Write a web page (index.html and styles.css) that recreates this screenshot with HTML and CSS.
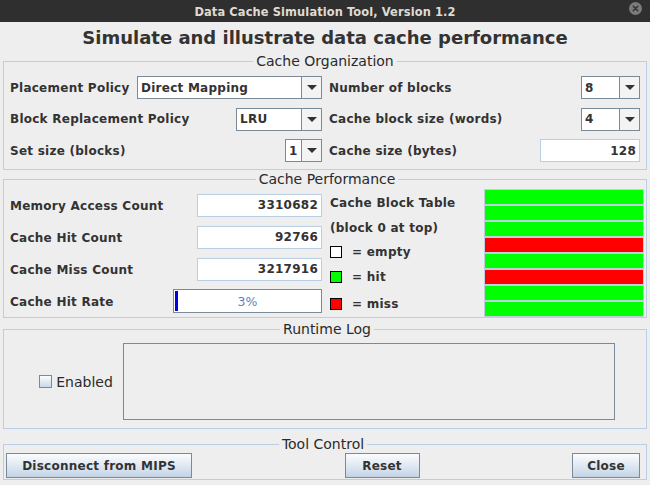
FILE: index.html
```html
<!DOCTYPE html>
<html>
<head>
<meta charset="utf-8">
<link rel="stylesheet" href="styles.css">
</head>
<body>
<div class="titlebar">
  <span class="title">Data Cache Simulation Tool, Version 1.2</span>
  <span class="close"><svg width="13" height="13" viewBox="0 0 13 13"><circle cx="6.5" cy="6.5" r="6.5" fill="#7b7b7b"/><path d="M4.3 4.3 L8.7 8.7 M8.7 4.3 L4.3 8.7" stroke="#353535" stroke-width="1.6" stroke-linecap="round"/></svg></span>
</div>
<h1 class="heading">Simulate and illustrate data cache performance</h1>

<fieldset class="panel panel-org">
  <legend>Cache Organization</legend>
  <div class="org-grid">
    <div class="row"><span class="lbl">Placement Policy</span>
      <div class="combo w-dm"><span class="combo-val">Direct Mapping</span><span class="combo-btn"><i class="tri"></i></span></div></div>
    <div class="row"><span class="lbl">Number of blocks</span>
      <div class="combo w-num"><span class="combo-val">8</span><span class="combo-btn"><i class="tri"></i></span></div></div>
    <div class="row"><span class="lbl">Block Replacement Policy</span>
      <div class="combo w-lru"><span class="combo-val">LRU</span><span class="combo-btn"><i class="tri"></i></span></div></div>
    <div class="row"><span class="lbl">Cache block size (words)</span>
      <div class="combo w-num"><span class="combo-val">4</span><span class="combo-btn"><i class="tri"></i></span></div></div>
    <div class="row"><span class="lbl">Set size (blocks)</span>
      <div class="combo w-set"><span class="combo-val">1</span><span class="combo-btn"><i class="tri"></i></span></div></div>
    <div class="row"><span class="lbl">Cache size (bytes)</span>
      <span class="field w-size">128</span></div>
  </div>
</fieldset>

<fieldset class="panel panel-perf">
  <legend>Cache Performance</legend>
  <div class="perf">
    <div class="perf-left">
      <div class="prow"><span class="lbl">Memory Access Count</span><span class="field w-count">3310682</span></div>
      <div class="prow"><span class="lbl">Cache Hit Count</span><span class="field w-count">92766</span></div>
      <div class="prow"><span class="lbl">Cache Miss Count</span><span class="field w-count">3217916</span></div>
      <div class="prow"><span class="lbl">Cache Hit Rate</span>
        <div class="progress"><span class="progress-fill" style="width:3px"></span><span class="progress-text">3%</span></div></div>
    </div>
    <div class="perf-right">
      <div class="legend-col">
        <div class="lrow lbl">Cache Block Table</div>
        <div class="lrow lbl">(block 0 at top)</div>
        <div class="lrow lbl"><span class="sq sq-empty"></span>= empty</div>
        <div class="lrow lbl"><span class="sq sq-hit"></span>= hit</div>
        <div class="lrow lbl"><span class="sq sq-miss"></span>= miss</div>
      </div>
      <div class="blocks">
        <div class="blk hit"></div>
        <div class="blk hit"></div>
        <div class="blk hit"></div>
        <div class="blk miss"></div>
        <div class="blk hit"></div>
        <div class="blk miss"></div>
        <div class="blk hit"></div>
        <div class="blk hit"></div>
      </div>
    </div>
  </div>
</fieldset>

<fieldset class="panel panel-log">
  <legend>Runtime Log</legend>
  <div class="log-row">
    <label class="chk"><span class="box"></span>Enabled</label>
    <div class="logarea"></div>
  </div>
</fieldset>

<fieldset class="panel panel-ctl">
  <legend>Tool Control</legend>
  <div class="ctl-row">
    <button class="btn btn-disc">Disconnect from MIPS</button>
    <button class="btn btn-reset">Reset</button>
    <button class="btn btn-close">Close</button>
  </div>
</fieldset>
</body>
</html>
```

FILE: styles.css
```css
* { box-sizing: border-box; }
html, body { margin: 0; padding: 0; }
body {
  background: #eeeeee;
  width: 650px;
  height: 485px;
  overflow: hidden;
  font-family: "DejaVu Sans", sans-serif;
  color: #333333;
}
.titlebar {
  height: 22px;
  background: #2f2f2f;
  display: grid;
  grid-template-columns: 1fr auto 1fr;
  align-items: center;
}
.title {
  grid-column: 2;
  font-family: "DejaVu Sans Condensed", "DejaVu Sans", sans-serif;
  font-stretch: condensed;
  font-weight: bold;
  font-size: 12.7px;
  letter-spacing: 0.12px;
  color: #dfdbd2;
  white-space: nowrap;
}
.close {
  grid-column: 3;
  justify-self: end;
  align-self: start;
  margin-top: 2px;
  margin-right: 8px;
  width: 13px;
  height: 13px;
  display: flex;
}
.heading {
  margin: 4px 0 0;
  font-size: 18px;
  line-height: 24px;
  text-align: center;
  font-weight: bold;
  color: #333333;
}
.panel {
  margin: 0 3px;
  border: 1px solid #b8cfe5;
  min-width: 0;
}
.panel legend {
  margin: 0 auto;
  padding: 0 3px;
  font-size: 14px;
  line-height: 16px;
  color: #2a2a2a;
}
.panel-org { margin-top: 3px; padding: 7px 6px 7px 6px; }
.panel-perf { margin-top: 1px; padding: 2px 2px 0 6px; }
.panel-log { margin-top: 3px; padding: 6px 4px 8px 8px; }
.panel-ctl { margin-top: 7px; padding: 1px 6px 1px 2px; }

.lbl {
  font-weight: bold;
  font-size: 12px;
  letter-spacing: 0.25px;
  white-space: nowrap;
}
.org-grid {
  display: grid;
  grid-template-columns: 312px 1fr;
  column-gap: 7px;
  row-gap: 8.5px;
  grid-auto-rows: 23px;
}
.row {
  display: flex;
  align-items: center;
  justify-content: space-between;
}
.combo {
  display: flex;
  height: 23px;
  border: 1px solid #7a8a99;
  background: #ffffff;
}
.combo-val {
  flex: 1;
  padding-left: 3px;
  font-weight: bold;
  font-size: 12px;
  letter-spacing: 0.25px;
  display: flex;
  align-items: center;
  white-space: nowrap;
  overflow: hidden;
}
.combo-btn {
  width: 20px;
  border-left: 1px solid #7a8a99;
  background: #f3f3f3;
  display: flex;
  align-items: center;
  justify-content: center;
}
.tri {
  width: 0;
  height: 0;
  border-left: 5px solid transparent;
  border-right: 5px solid transparent;
  border-top: 5px solid #333333;
}
.w-dm { width: 185px; }
.w-lru { width: 86px; }
.w-set { width: 37px; }
.w-num { width: 59px; }
.field {
  height: 23px;
  border: 1px solid #b8cfe5;
  background: #ffffff;
  font-weight: bold;
  font-size: 12px;
  letter-spacing: 0.25px;
  display: flex;
  align-items: center;
  justify-content: flex-end;
  padding-right: 3px;
}
.w-size { width: 100px; }
.w-count { width: 125px; }

.perf {
  display: grid;
  grid-template-columns: 312px 1fr;
  column-gap: 8px;
}
.perf-left {
  display: grid;
  grid-auto-rows: 32px;
}
.prow {
  display: flex;
  align-items: center;
  justify-content: space-between;
}
.prow .lbl { padding-top: 2px; }
.progress {
  width: 149px;
  height: 24px;
  border: 1px solid #7a8a99;
  background: #ffffff;
  padding: 1px;
  display: grid;
}
.progress > * { grid-area: 1 / 1; }
.progress-fill {
  background: #0000e6;
  height: 100%;
}
.progress-text {
  align-self: center;
  text-align: center;
  color: #5f7fbf;
  font-size: 12.5px;
}
.perf-right {
  display: flex;
  justify-content: space-between;
}
.legend-col {
  display: grid;
  grid-template-rows: 27px 23.5px 24.5px 26px 27px;
}
.lrow {
  display: flex;
  align-items: center;
  gap: 10px;
}
.sq {
  width: 12px;
  height: 12px;
  border: 1px solid #000000;
}
.sq-empty { background: #ffffff; }
.sq-hit { background: #00ff00; }
.sq-miss { background: #ff0000; }
.blocks {
  width: 160px;
  display: flex;
  flex-direction: column;
}
.blk {
  height: 16px;
  border: 1px solid #bfcfdf;
}
.blk.hit { background: #00ff00; }
.blk.miss { background: #ff0000; }

.log-row {
  display: flex;
  justify-content: center;
  align-items: center;
  gap: 10px;
}
.chk {
  display: flex;
  align-items: center;
  gap: 4px;
  font-size: 14px;
  color: #2a2a2a;
}
.box {
  width: 13px;
  height: 13px;
  border: 1px solid #7a8a99;
  background: linear-gradient(#fbfdff, #c8d8ea);
}
.logarea {
  width: 492px;
  height: 77px;
  border: 1px solid #7a8a99;
}

.ctl-row {
  display: flex;
  justify-content: space-between;
}
.btn {
  height: 25px;
  border: 1px solid #7a8a99;
  background: linear-gradient(#fbfcfe, #dde7f2 55%, #c3d3e4);
  font-family: "DejaVu Sans", sans-serif;
  font-weight: bold;
  font-size: 12px;
  letter-spacing: 0.25px;
  color: #333333;
  display: flex;
  align-items: center;
  justify-content: center;
  padding: 0;
  margin: 0;
}
.btn-disc { width: 186px; }
.btn-reset { width: 75px; }
.btn-close { width: 68px; }
```
